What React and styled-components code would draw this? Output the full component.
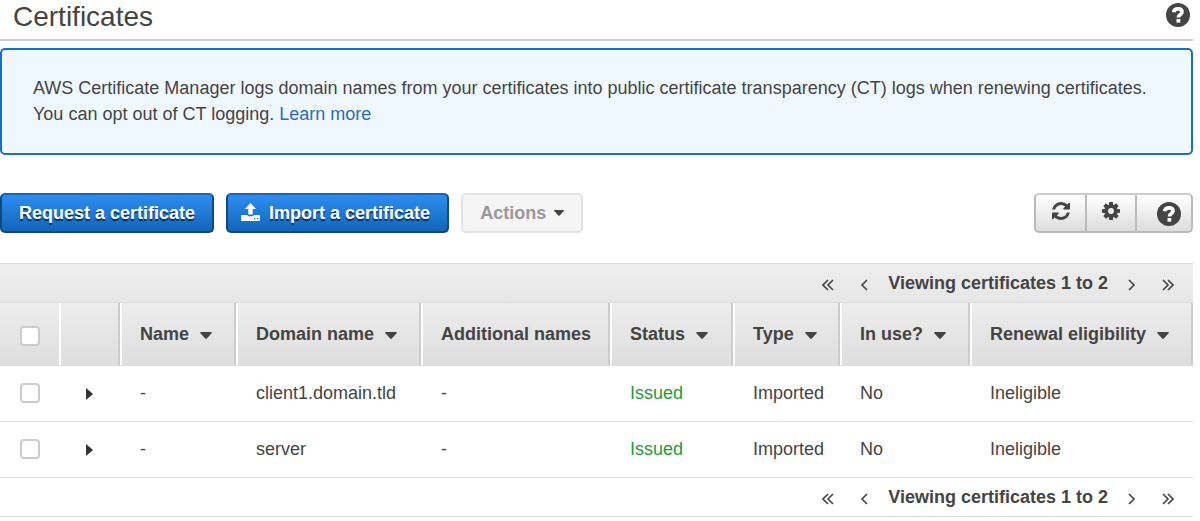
import React from "react";
import styled, { createGlobalStyle } from "styled-components";

const GlobalStyle = createGlobalStyle`
  * {
    box-sizing: border-box;
  }
  body {
    margin: 0;
    background: #fff;
    color: #444;
    font-family: "Liberation Sans", Arial, sans-serif;
    font-size: 18px;
    line-height: 26px;
  }
`;

const PageWrapper = styled("main")`
  margin-right: 7px;
`;

const HeaderWrapper = styled("header")`
  display: flex;
  justify-content: space-between;
  align-items: flex-start;
  height: 41px;
  padding: 0 3px 0 13px;
  border-bottom: 2px solid #ccc;
`;

const TitleWrapper = styled("h1")`
  margin: 0;
  font-size: 28px;
  font-weight: normal;
  line-height: 34px;
`;

const IconButton = styled("button")`
  display: flex;
  padding: 0;
  border: 0;
  background: none;
  color: inherit;
  cursor: pointer;
`;

const HelpButton = styled(IconButton)`
  margin-top: 3px;
`;

const NoticeWrapper = styled("section")`
  margin-top: 7px;
  padding: 25px 31px 26px;
  border: 2px solid #1a6fc4;
  border-radius: 5px;
  background: #f0f8ff;

  p {
    margin: 0;
  }
  a {
    color: #2a6bc2;
    text-decoration: none;
  }
`;

const ToolbarWrapper = styled("div")`
  display: flex;
  justify-content: space-between;
  margin: 38px 0 30px;
`;

const ButtonsWrapper = styled("div")`
  display: flex;
  gap: 12px;
`;

const ButtonWrapper = styled("button")`
  display: flex;
  align-items: center;
  height: 40px;
  padding: 0 17px;
  border: 2px solid #e3e3e3;
  border-radius: 5px;
  background: #f5f5f5;
  color: #999;
  font: bold 18px "Liberation Sans", Arial, sans-serif;
  white-space: nowrap;
`;

const PrimaryButton = styled(ButtonWrapper)`
  border-color: #1765b5 #12487f #12487f;
  background: linear-gradient(#2e8df0, #1166bb);
  color: #fff;
  text-shadow: 0 2px 1px rgba(0, 0, 0, 0.6);
  cursor: pointer;
`;

const ImportButton = styled(PrimaryButton)`
  gap: 9px;
  padding-left: 13px;
`;

const ActionsButton = styled(ButtonWrapper)`
  gap: 8px;
`;

const ToolsWrapper = styled("div")`
  display: flex;
  height: 40px;
  border: 2px solid #bbb;
  border-top-color: #ccc;
  border-radius: 5px;
  background: linear-gradient(#fff, #ddd);
`;

const ToolButton = styled(IconButton)`
  width: 50px;
  padding-top: 7px;
  justify-content: center;

  &:first-child {
    width: 49px;
  }
  &:last-child {
    width: 56px;
    padding-right: 10px;
    justify-content: flex-end;
  }
  & + & {
    border-left: 2px solid #bbb;
  }
`;

const PagerWrapper = styled("nav")`
  display: flex;
  align-items: center;
  justify-content: flex-end;
  height: 40px;
  padding-right: 19px;
  border-top: 1px solid #ddd;
  border-bottom: 1px solid #ddd;
  background: ${({ $footer }) =>
    $footer ? "#fff" : "linear-gradient(#eee, #e7e7e7)"};
`;

const PagerText = styled("strong")`
  margin: 0 20px;
`;

const PagerButton = styled(IconButton)`
  margin-top: 4px;
`;

const EdgeButton = styled(PagerButton)`
  margin-left: ${({ $last }) => ($last ? "26px" : "0")};
  margin-right: ${({ $last }) => ($last ? "0" : "26px")};
`;

const TableWrapper = styled("table")`
  width: 100%;
  table-layout: fixed;
  border-collapse: separate;
  border-spacing: 0;
`;

const HeadCell = styled("th")`
  height: 63px;
  padding: 0 0 0 18px;
  border-left: 2px solid #fff;
  border-right: 2px solid #ccc;
  border-bottom: 1px solid #ddd;
  background: linear-gradient(#ededed, #dedede);
  text-align: left;
  white-space: nowrap;

  &:first-child {
    padding: 4px 0 0;
    border-left: 0;
    border-right: 0;
  }
  &:nth-child(2) {
    border-left-width: 2px;
  }
`;

const Cell = styled("td")`
  height: 56px;
  padding: 0 0 1px 20px;
  border-bottom: 1px solid #ddd;
  color: ${({ $issued }) => ($issued ? "#1d9b3c" : "inherit")};
  white-space: nowrap;

  &:first-child {
    padding-left: 0;
  }
  tr:last-child > & {
    height: 55px;
    border-bottom: 0;
  }
`;

const SortButton = styled("button")`
  display: flex;
  align-items: center;
  gap: 11px;
  padding: 0;
  border: 0;
  background: none;
  color: inherit;
  font: inherit;
  cursor: pointer;

  svg {
    margin-top: 3px;
  }
`;

const Checkbox = styled("input")`
  display: block;
  appearance: none;
  width: 20px;
  height: 20px;
  margin: 0 auto;
  border: 2px solid #ccc;
  border-radius: 4px;
  background: #fff;

  &:checked {
    background: #1166bb;
  }
`;

const ExpandButton = styled(IconButton)`
  padding: 2px 0 0 7px;
`;

const columns = [
  { title: "Name", width: 116, sortable: true },
  { title: "Domain name", width: 185, sortable: true },
  { title: "Additional names", width: 189 },
  { title: "Status", width: 123, sortable: true },
  { title: "Type", width: 107, sortable: true },
  { title: "In use?", width: 130, sortable: true },
  { title: "Renewal eligibility", sortable: true },
];

const certificates = [
  { domain: "client1.domain.tld" },
  { domain: "server" },
];

function QuestionIcon() {
  return (
    <svg width="24" height="24" viewBox="0 0 24 24" aria-hidden="true">
      <circle cx="12" cy="12" r="12" fill="#444" />
      <path
        d="M7.6 9.3C8 6.9 9.7 5.8 12 5.8c2.4 0 4 1.1 4 3.1 0 2.6-3.6 2.6-3.6 5.6"
        fill="none"
        stroke="#fff"
        strokeWidth="3.7"
      />
      <path d="M10.5 16h3.8v3.6h-3.8z" fill="#fff" />
    </svg>
  );
}

function RefreshIcon() {
  return (
    <svg width="18" height="18" viewBox="0 0 1536 1536" aria-hidden="true">
      <path
        fill="#444"
        d="M1511 928q0 5-1 7-64 268-268 434.5T764 1536q-146 0-282.5-55T238 1324l-129 129q-19 19-45 19t-45-19-19-45V960q0-26 19-45t45-19h448q26 0 45 19t19 45-19 45l-137 137q71 66 161 102t187 36q134 0 250-65t186-179q11-17 53-117 8-23 30-23h192q13 0 22.5 9.5t9.5 22.5zm25-800v448q0 26-19 45t-45 19h-448q-26 0-45-19t-19-45 19-45l138-138Q969 256 768 256q-134 0-250 65T332 500q-11 17-53 117-8 23-30 23H50q-13 0-22.5-9.5T18 608v-7q65-268 270-434.5T768 0q146 0 284 55.5T1297 212l130-129q19-19 45-19t45 19 19 45z"
      />
    </svg>
  );
}

function GearIcon() {
  return (
    <svg width="18" height="18" viewBox="0 0 18 18" aria-hidden="true">
      <g fill="#444">
        {[0, 45, 90, 135].map((angle) => (
          <path
            key={angle}
            d="M7.2 0h3.6l.5 4v10l-.5 4H7.2l-.5-4V4z"
            transform={`rotate(${angle} 9 9)`}
          />
        ))}
        <circle cx="9" cy="9" r="6.6" />
      </g>
      <circle cx="9" cy="9" r="2.9" fill="#f3f3f3" />
    </svg>
  );
}

function UploadIcon() {
  return (
    <svg width="19" height="20" viewBox="0 0 19 20" aria-hidden="true">
      <path
        fill="#fff"
        d="M9.5 0 15 6h-3.3v5.5H7.3V6H4zM0 13q0-1 1-1h5.2q.5 1.3 1.6 1.3h3.4q1.1 0 1.6-1.3H18q1 0 1 1v4q0 1-1 1H1q-1 0-1-1z"
      />
      <path fill="#1b70c8" d="M13 15h1.3v1.3H13zM16 15h1.3v1.3H16z" />
    </svg>
  );
}

function CaretIcon({ width = 12, height = 7 }) {
  return (
    <svg width={width} height={height} viewBox="0 0 12 7" aria-hidden="true">
      <path d="M1 0h10q1.4.2.4 1.4L6.8 6.6q-.8.8-1.6 0L.6 1.4Q-.4.2 1 0z" fill="#444" />
    </svg>
  );
}

const chevronPaths = {
  first: "M6 1L1 6l5 5M11 1L6 6l5 5",
  previous: "M7 1L2 6l5 5",
  next: "M1 1l5 5-5 5",
  last: "M1 1l5 5-5 5M6 1l5 5-5 5",
};

function Chevron({ kind }) {
  const width = kind === "first" || kind === "last" ? 12 : 8;

  return (
    <svg
      width={width}
      height="12"
      viewBox={`0 0 ${width} 12`}
      aria-hidden="true"
    >
      <path
        d={chevronPaths[kind]}
        fill="none"
        stroke="#444"
        strokeWidth="1.6"
      />
    </svg>
  );
}

function Pager({ footer }) {
  return (
    <PagerWrapper
      $footer={footer}
      aria-label={footer ? "Bottom pages" : "Top pages"}
    >
      <EdgeButton aria-label="First page">
        <Chevron kind="first" />
      </EdgeButton>
      <PagerButton aria-label="Previous page">
        <Chevron kind="previous" />
      </PagerButton>
      <PagerText>Viewing certificates 1 to 2</PagerText>
      <PagerButton aria-label="Next page">
        <Chevron kind="next" />
      </PagerButton>
      <EdgeButton $last aria-label="Last page">
        <Chevron kind="last" />
      </EdgeButton>
    </PagerWrapper>
  );
}

function CertificatesTable() {
  return (
    <TableWrapper>
      <colgroup>
        <col style={{ width: 59 }} />
        <col style={{ width: 61 }} />
        {columns.map(({ title, width }) => (
          <col key={title} style={{ width }} />
        ))}
      </colgroup>
      <thead>
        <tr>
          <HeadCell>
            <Checkbox type="checkbox" aria-label="Select all" />
          </HeadCell>
          <HeadCell />
          {columns.map(({ title, sortable }) => (
            <HeadCell key={title}>
              {sortable ? (
                <SortButton>
                  {title}
                  <CaretIcon />
                </SortButton>
              ) : (
                title
              )}
            </HeadCell>
          ))}
        </tr>
      </thead>
      <tbody>
        {certificates.map(({ domain }) => (
          <tr key={domain}>
            <Cell>
              <Checkbox type="checkbox" aria-label={`Select ${domain}`} />
            </Cell>
            <Cell>
              <ExpandButton aria-label={`Expand ${domain}`}>
                <svg width="7" height="12" viewBox="0 0 7 12">
                  <path d="M0 0l7 6-7 6z" fill="#333" />
                </svg>
              </ExpandButton>
            </Cell>
            <Cell>-</Cell>
            <Cell>{domain}</Cell>
            <Cell>-</Cell>
            <Cell $issued>Issued</Cell>
            <Cell>Imported</Cell>
            <Cell>No</Cell>
            <Cell>Ineligible</Cell>
          </tr>
        ))}
      </tbody>
    </TableWrapper>
  );
}

function App() {
  return (
    <PageWrapper>
      <GlobalStyle />
      <HeaderWrapper>
        <TitleWrapper>Certificates</TitleWrapper>
        <HelpButton aria-label="Help">
          <QuestionIcon />
        </HelpButton>
      </HeaderWrapper>
      <NoticeWrapper>
        <p>
          AWS Certificate Manager logs domain names from your certificates into
          public certificate transparency (CT) logs when renewing certificates.
        </p>
        <p>
          You can opt out of CT logging. <a href="#learn-more">Learn more</a>
        </p>
      </NoticeWrapper>
      <ToolbarWrapper>
        <ButtonsWrapper>
          <PrimaryButton>Request a certificate</PrimaryButton>
          <ImportButton>
            <UploadIcon />
            Import a certificate
          </ImportButton>
          <ActionsButton disabled>
            Actions
            <CaretIcon width={10} height={6} />
          </ActionsButton>
        </ButtonsWrapper>
        <ToolsWrapper>
          <ToolButton aria-label="Refresh">
            <RefreshIcon />
          </ToolButton>
          <ToolButton aria-label="Settings">
            <GearIcon />
          </ToolButton>
          <ToolButton aria-label="Help">
            <QuestionIcon />
          </ToolButton>
        </ToolsWrapper>
      </ToolbarWrapper>
      <Pager />
      <CertificatesTable />
      <Pager footer />
    </PageWrapper>
  );
}

export default App;
